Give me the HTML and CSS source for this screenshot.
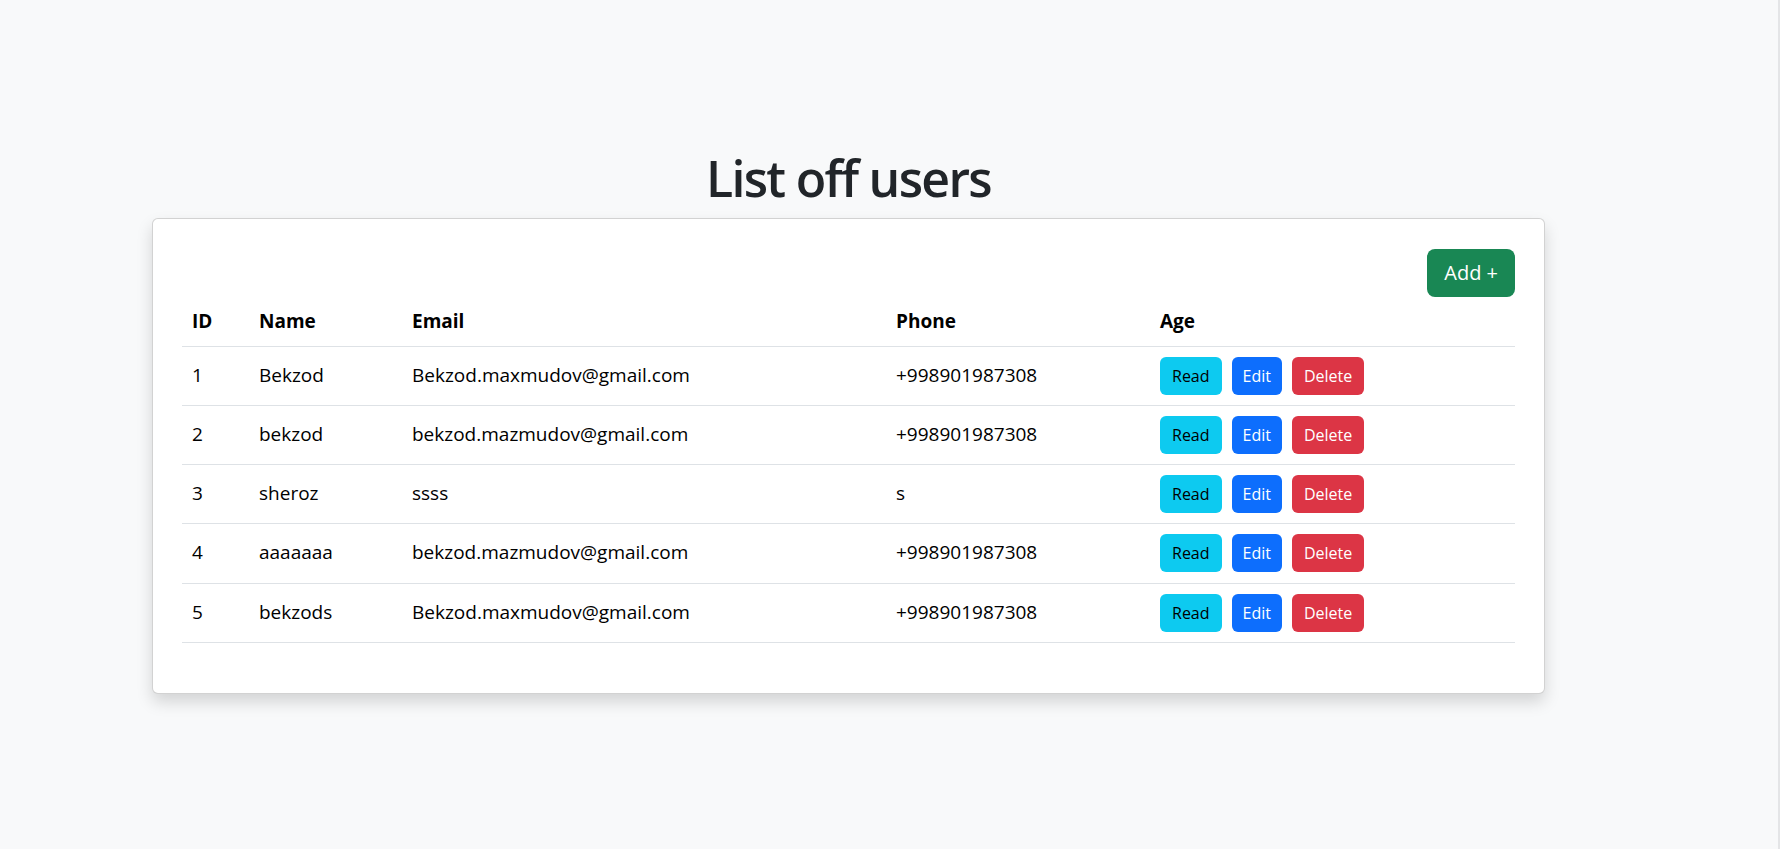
FILE: index.html
```html
<!DOCTYPE html>
<html lang="en">
<head>
<meta charset="utf-8">
<title>Users</title>
<link rel="stylesheet" href="styles.css">
</head>
<body>
<main class="page">
  <h1 class="title">List off users</h1>
  <section class="card">
    <div class="toolbar">
      <button class="btn btn-lg btn-success">Add +</button>
    </div>
    <table class="users">
      <thead>
        <tr>
          <th class="c-id">ID</th>
          <th class="c-name">Name</th>
          <th class="c-email">Email</th>
          <th class="c-phone">Phone</th>
          <th class="c-age">Age</th>
        </tr>
      </thead>
      <tbody>
        <tr>
          <td>1</td><td>Bekzod</td><td>Bekzod.maxmudov@gmail.com</td><td>+998901987308</td>
          <td><div class="actions"><button class="btn btn-info">Read</button><button class="btn btn-primary">Edit</button><button class="btn btn-danger">Delete</button></div></td>
        </tr>
        <tr>
          <td>2</td><td>bekzod</td><td>bekzod.mazmudov@gmail.com</td><td>+998901987308</td>
          <td><div class="actions"><button class="btn btn-info">Read</button><button class="btn btn-primary">Edit</button><button class="btn btn-danger">Delete</button></div></td>
        </tr>
        <tr>
          <td>3</td><td>sheroz</td><td>ssss</td><td>s</td>
          <td><div class="actions"><button class="btn btn-info">Read</button><button class="btn btn-primary">Edit</button><button class="btn btn-danger">Delete</button></div></td>
        </tr>
        <tr>
          <td>4</td><td>aaaaaaa</td><td>bekzod.mazmudov@gmail.com</td><td>+998901987308</td>
          <td><div class="actions"><button class="btn btn-info">Read</button><button class="btn btn-primary">Edit</button><button class="btn btn-danger">Delete</button></div></td>
        </tr>
        <tr>
          <td>5</td><td>bekzods</td><td>Bekzod.maxmudov@gmail.com</td><td>+998901987308</td>
          <td><div class="actions"><button class="btn btn-info">Read</button><button class="btn btn-primary">Edit</button><button class="btn btn-danger">Delete</button></div></td>
        </tr>
      </tbody>
    </table>
  </section>
</main>
</body>
</html>
```
FILE: styles.css
```css
html, body {
  margin: 0;
  padding: 0;
}

body {
  background: #f8f9fa;
  font-family: "Open Sans", "Noto Sans", sans-serif;
  color: #212529;
  min-height: 849px;
  box-shadow: inset -2px 0 0 #e4e5e7;
}

.page {
  width: 1393px;
  margin-left: 152px;
  padding-top: 148px;
}

.title {
  margin: 0 0 10px;
  text-align: center;
  font-size: 50px;
  font-weight: 600;
  line-height: 60px;
  letter-spacing: -1.7px;
  color: #212529;
}

.card {
  background: #fff;
  border: 1px solid rgba(0, 0, 0, 0.175);
  border-radius: 6px;
  box-shadow: 0 8px 16px rgba(0, 0, 0, 0.15);
  padding: 30px 29px 30px;
}

.toolbar {
  display: flex;
  justify-content: flex-end;
}

.users {
  width: 100%;
  border-collapse: collapse;
  table-layout: fixed;
  margin-bottom: 20px;
  color: #000;
}

.users th,
.users td {
  box-sizing: border-box;
  padding: 10px;
  text-align: left;
  vertical-align: baseline;
  border-bottom: 1px solid #dee2e6;
  font-size: 19px;
  line-height: 28.8px;
}

.users td {
  padding: 10.1px 10px;
}

.users th {
  font-weight: 700;
}

.c-id { width: 67px; }
.c-name { width: 153px; }
.c-email { width: 484px; }
.c-phone { width: 264px; }

.actions {
  display: flex;
  gap: 10px;
}

.btn {
  font-family: inherit;
  font-size: 16px;
  line-height: 24px;
  padding: 6px 11px;
  border: 1px solid transparent;
  border-radius: 6px;
  cursor: pointer;
}

.btn-primary {
  padding: 6px 10px;
}

.btn-lg {
  font-size: 20px;
  line-height: 30px;
  padding: 8px 16px;
  border-radius: 8px;
}

.btn-success { background: #198754; color: #fff; }
.btn-info { background: #0dcaf0; color: #000; }
.btn-primary { background: #0d6efd; color: #fff; }
.btn-danger { background: #dc3545; color: #fff; }
```
